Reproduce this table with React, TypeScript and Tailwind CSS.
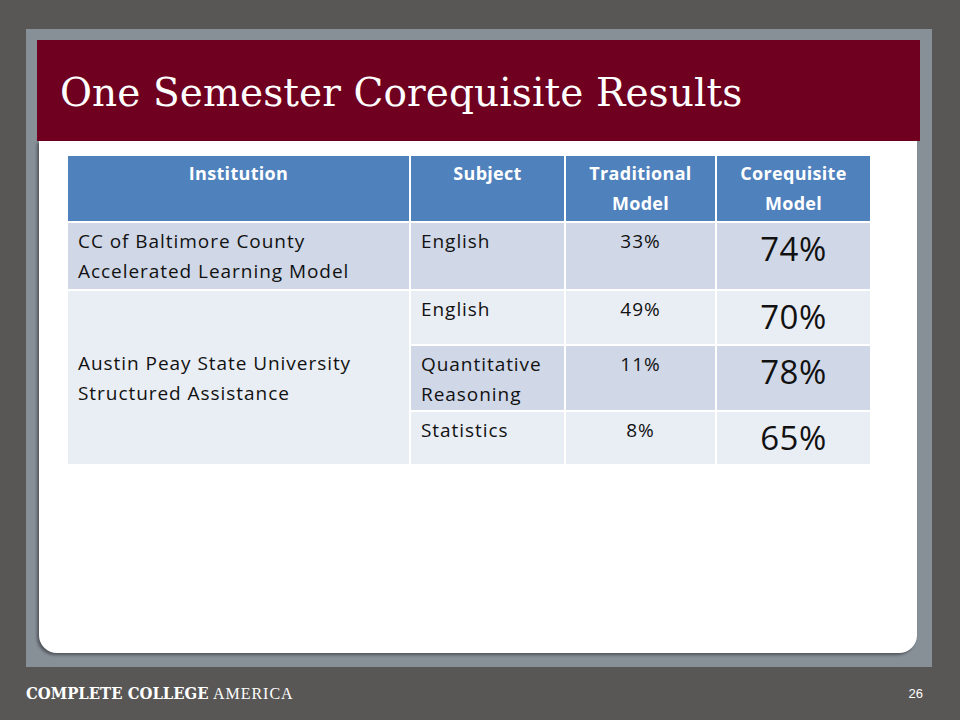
import React from "react";

const body = { fontFamily: '"Open Sans", "Noto Sans", sans-serif' };

const txt = "text-[#111] text-[19px] leading-[30px] tracking-[0.95px]";
const big = "text-[#111] text-[33px] leading-[40px] tracking-[0.5px] text-center pt-[6px]";

export default function App() {
  return (
    <div className="w-[960px] h-[720px] bg-[#595755] flex flex-col overflow-hidden">
      <div className="mt-[29px] ml-[26px] w-[906px] h-[638px] bg-[#878f97] pt-[11px] pl-[11px] pr-[12px] flex flex-col">
        <div className="h-[101px] bg-[#6f0020] flex items-center pl-[23px]">
          <h1
            className="text-white text-[39px] leading-none pt-[3px] tracking-[0.1px]"
            style={{ fontFamily: '"DejaVu Serif", "Liberation Serif", serif' }}
          >
            One Semester Corequisite Results
          </h1>
        </div>
        <div className="h-[512px] mr-[3px] ml-[2px] bg-white rounded-b-[18px] shadow-[-2px_2px_3px_rgba(0,0,0,0.4)] pt-[15px] pl-[29px]">
          <div
            className="grid grid-cols-[341px_153px_149px_153px] grid-rows-[65px_66px_53px_64px_52px] gap-[2px] w-[802px]"
            style={body}
          >
            {["Institution", "Subject", "Traditional Model", "Corequisite Model"].map((h) => (
              <div
                key={h}
                className="bg-[#4f81bd] text-white font-bold text-[18px] leading-[30px] tracking-[0.3px] text-center pt-[2px] px-[12px]"
              >
                {h}
              </div>
            ))}

            <div className={`bg-[#d0d8e8] ${txt} pl-[10px] pt-[3px]`}>
              CC of Baltimore County
              <br />
              Accelerated Learning Model
            </div>
            <div className={`bg-[#d0d8e8] ${txt} pl-[10px] pt-[3px]`}>English</div>
            <div className={`bg-[#d0d8e8] ${txt} text-center pt-[3px]`}>33%</div>
            <div className={`bg-[#d0d8e8] ${big}`}>74%</div>

            <div className={`row-span-3 bg-[#e9edf4] ${txt} pl-[10px] flex items-center`}>
              <div>
                Austin Peay State University
                <br />
                Structured Assistance
              </div>
            </div>
            <div className={`bg-[#e9edf4] ${txt} pl-[10px] pt-[3px]`}>English</div>
            <div className={`bg-[#e9edf4] ${txt} text-center pt-[3px]`}>49%</div>
            <div className={`bg-[#e9edf4] ${big}`}>70%</div>

            <div className={`bg-[#d0d8e8] ${txt} pl-[10px] pt-[3px]`}>
              Quantitative
              <br />
              Reasoning
            </div>
            <div className={`bg-[#d0d8e8] ${txt} text-center pt-[3px]`}>11%</div>
            <div className={`bg-[#d0d8e8] ${big}`}>78%</div>

            <div className={`bg-[#e9edf4] ${txt} pl-[10px] pt-[3px]`}>Statistics</div>
            <div className={`bg-[#e9edf4] ${txt} text-center pt-[3px]`}>8%</div>
            <div className={`bg-[#e9edf4] ${big}`}>65%</div>
          </div>
        </div>
      </div>
      <div className="flex items-center justify-between pl-[26px] pr-[37px] h-[53px]">
        <div className="text-white text-[16.5px] leading-none pt-[1px]">
          <span
            className="font-extrabold"
            style={{ fontFamily: '"DejaVu Serif Condensed", "DejaVu Serif", serif', fontStretch: "condensed" }}
          >
            COMPLETE COLLEGE
          </span>{" "}
          <span className="font-light tracking-[1px] text-[16px]" style={{ fontFamily: '"Liberation Serif", serif' }}>
            AMERICA
          </span>
        </div>
        <div className="text-white text-[13px]" style={{ fontFamily: '"Liberation Sans", Arial, sans-serif' }}>
          26
        </div>
      </div>
    </div>
  );
}
